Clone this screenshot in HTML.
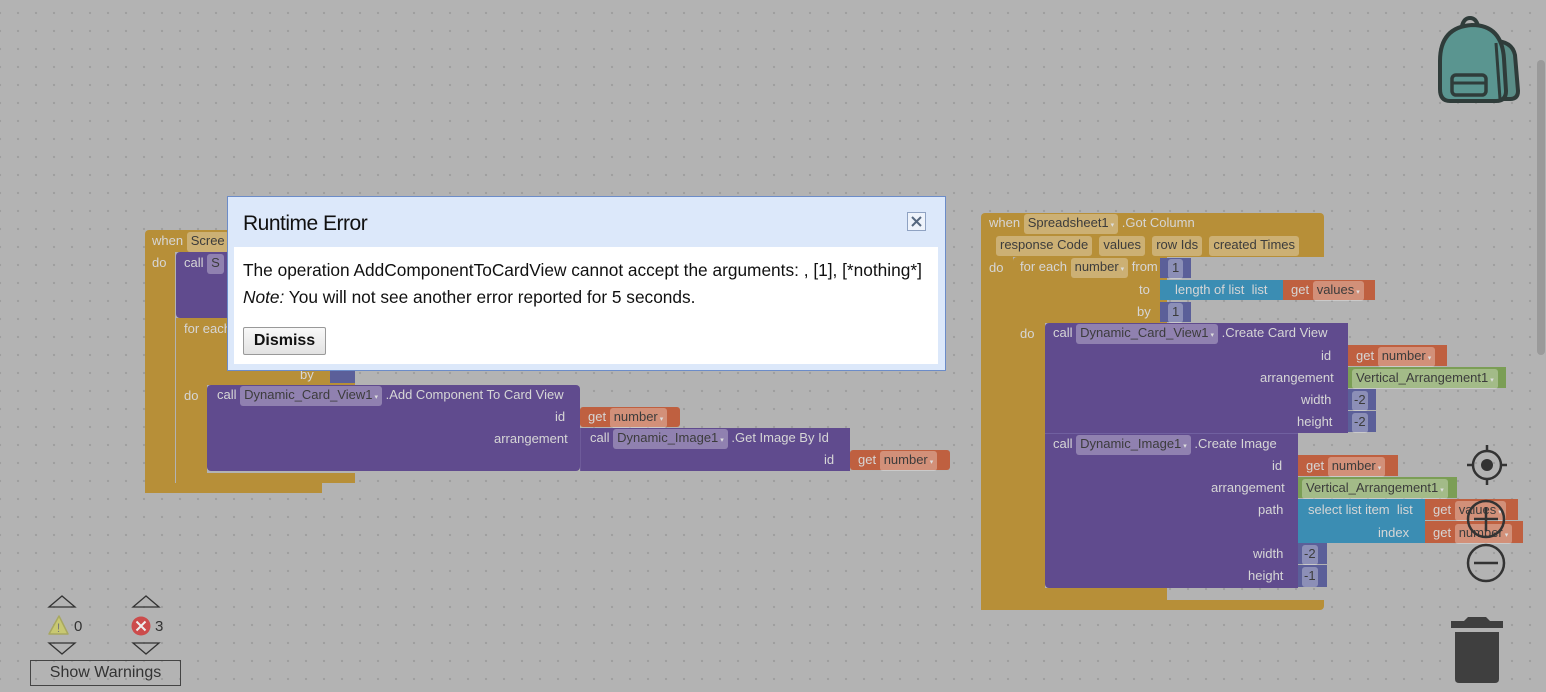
<!DOCTYPE html>
<html><head><meta charset="utf-8"><style>
*{margin:0;padding:0;box-sizing:border-box}
body{width:1546px;height:692px;overflow:hidden;position:relative;font-family:"Liberation Sans",sans-serif;
background-color:#b3b3b3;background-image:radial-gradient(circle,#9e9e9e 1px,transparent 1.3px);background-size:18px 18px;background-position:9px 4px}
.b{position:absolute}
.G{background:#b78f38}.P{background:#604b8e}.O{background:#bf6040}.M{background:#5b5f99}.B{background:#3b8db3}.N{background:#7b9e55}
.t{position:absolute;font-size:13px;color:#d6d6d6;white-space:nowrap;line-height:17px}
.f{display:inline-block;background:rgba(255,255,255,.3);color:#3c3c3c;border-radius:3px;padding:0 4px;line-height:17px}
.f:after{content:" ▾";font-size:7px;color:#ddd}
.nf:after{content:""}
</style></head><body>
<!-- left group -->
<div class="b G" style="left:145px;top:230px;width:177px;height:263px;border-radius:4px"></div>
<div class="b" style="left:175px;top:252px;width:147px;height:231px;background:#b3b3b3"></div>
<div class="b G" style="left:145px;top:483px;width:177px;height:10px"></div>
<div class="t" style="left:152px;top:232px">when <span class="f nf">Scree</span></div>
<div class="t" style="left:152px;top:254px">do</div>
<div class="b P" style="left:176px;top:252px;width:60px;height:66px;border-radius:4px"></div>
<div class="t" style="left:184px;top:254px">call <span class="f nf">S</span></div>
<div class="b G" style="left:176px;top:318px;width:179px;height:165px"></div>
<div class="b" style="left:207px;top:385px;width:148px;height:88px;background:#b3b3b3"></div>
<div class="b G" style="left:176px;top:473px;width:155px;height:10px"></div>
<div class="t" style="left:184px;top:320px">for each</div>
<div class="t" style="left:300px;top:366px">by</div>
<div class="b M" style="left:330px;top:365px;width:25px;height:18px"></div>
<div class="t" style="left:184px;top:387px">do</div>
<div class="b P" style="left:207px;top:385px;width:373px;height:86px;border-radius:4px"></div>
<div class="b P" style="left:580px;top:428px;width:270px;height:43px;border-left:1px solid #6e5b9a"></div>
<div class="t" style="left:217px;top:386px">call <span class="f">Dynamic_Card_View1</span> .Add Component To Card View</div>
<div class="t" style="left:555px;top:408px">id</div>
<div class="t" style="left:494px;top:430px">arrangement</div>
<div class="t" style="left:590px;top:429px">call <span class="f">Dynamic_Image1</span> .Get Image By Id</div>
<div class="t" style="left:824px;top:451px">id</div>
<div class="b O" style="left:580px;top:407px;width:100px;height:20px;border-radius:3px"></div>
<div class="t" style="left:588px;top:408px">get <span class="f">number</span></div>
<div class="b O" style="left:850px;top:450px;width:100px;height:20px;border-radius:3px"></div>
<div class="t" style="left:858px;top:451px">get <span class="f">number</span></div>

<!-- right group -->
<div class="b G" style="left:981px;top:213px;width:343px;height:44px;border-radius:4px 4px 0 0"></div>
<div class="b G" style="left:981px;top:257px;width:32px;height:353px"></div>
<div class="b G" style="left:981px;top:600px;width:343px;height:10px;border-radius:0 0 4px 4px"></div>
<div class="t" style="left:989px;top:214px">when <span class="f">Spreadsheet1</span> .Got Column</div>
<div class="t" style="left:996px;top:236px"><span class="f nf">response Code</span>&nbsp; <span class="f nf">values</span>&nbsp; <span class="f nf">row Ids</span>&nbsp; <span class="f nf">created Times</span></div>
<div class="t" style="left:989px;top:259px">do</div>
<div class="b G" style="left:1013px;top:257px;width:154px;height:66px;border-radius:4px 0 0 0"></div>
<div class="b G" style="left:1013px;top:323px;width:32px;height:277px"></div>
<div class="b G" style="left:1013px;top:588px;width:154px;height:12px"></div>
<div class="t" style="left:1020px;top:258px">for each <span class="f">number</span> from</div>
<div class="t" style="left:1139px;top:281px">to</div>
<div class="t" style="left:1137px;top:303px">by</div>
<div class="t" style="left:1020px;top:325px">do</div>
<div class="b M" style="left:1160px;top:258px;width:31px;height:20px"></div>
<div class="t" style="left:1168px;top:259px"><span class="f nf">1</span></div>
<div class="b B" style="left:1160px;top:280px;width:123px;height:20px"></div>
<div class="t" style="left:1175px;top:281px">length of list&nbsp; list</div>
<div class="b O" style="left:1283px;top:280px;width:92px;height:20px"></div>
<div class="t" style="left:1291px;top:281px">get <span class="f">values</span></div>
<div class="b M" style="left:1160px;top:302px;width:31px;height:20px"></div>
<div class="t" style="left:1168px;top:303px"><span class="f nf">1</span></div>

<div class="b P" style="left:1045px;top:323px;width:303px;height:110px;border-radius:4px 0 0 0"></div>
<div class="t" style="left:1053px;top:324px">call <span class="f">Dynamic_Card_View1</span> .Create Card View</div>
<div class="t" style="left:1321px;top:347px">id</div>
<div class="t" style="left:1260px;top:369px">arrangement</div>
<div class="t" style="left:1301px;top:391px">width</div>
<div class="t" style="left:1297px;top:413px">height</div>
<div class="b O" style="left:1348px;top:345px;width:99px;height:21px"></div>
<div class="t" style="left:1356px;top:347px">get <span class="f">number</span></div>
<div class="b N" style="left:1348px;top:367px;width:158px;height:21px"></div>
<div class="t" style="left:1352px;top:369px"><span class="f">Vertical_Arrangement1</span></div>
<div class="b M" style="left:1348px;top:389px;width:28px;height:21px"></div>
<div class="t" style="left:1352px;top:391px"><span class="f nf" style="padding:0 2px">-2</span></div>
<div class="b M" style="left:1348px;top:411px;width:28px;height:21px"></div>
<div class="t" style="left:1352px;top:413px"><span class="f nf" style="padding:0 2px">-2</span></div>

<div class="b P" style="left:1045px;top:433px;width:253px;height:155px;border-top:1px solid #7060a0;border-radius:0 0 0 4px"></div>
<div class="t" style="left:1053px;top:435px">call <span class="f">Dynamic_Image1</span> .Create Image</div>
<div class="t" style="left:1272px;top:457px">id</div>
<div class="t" style="left:1211px;top:479px">arrangement</div>
<div class="t" style="left:1258px;top:501px">path</div>
<div class="t" style="left:1253px;top:545px">width</div>
<div class="t" style="left:1248px;top:567px">height</div>
<div class="b O" style="left:1298px;top:455px;width:100px;height:21px"></div>
<div class="t" style="left:1306px;top:457px">get <span class="f">number</span></div>
<div class="b N" style="left:1298px;top:477px;width:159px;height:21px"></div>
<div class="t" style="left:1302px;top:479px"><span class="f">Vertical_Arrangement1</span></div>
<div class="b B" style="left:1298px;top:499px;width:127px;height:44px"></div>
<div class="t" style="left:1308px;top:501px">select list item&nbsp; list</div>
<div class="t" style="left:1378px;top:524px">index</div>
<div class="b O" style="left:1425px;top:499px;width:93px;height:21px"></div>
<div class="t" style="left:1433px;top:501px">get <span class="f">values</span></div>
<div class="b O" style="left:1425px;top:521px;width:98px;height:22px"></div>
<div class="t" style="left:1433px;top:524px">get <span class="f">number</span></div>
<div class="b M" style="left:1298px;top:543px;width:29px;height:21px"></div>
<div class="t" style="left:1302px;top:545px"><span class="f nf" style="padding:0 2px">-2</span></div>
<div class="b M" style="left:1298px;top:565px;width:29px;height:22px"></div>
<div class="t" style="left:1302px;top:567px"><span class="f nf" style="padding:0 2px">-1</span></div>

<!-- scrollbar -->
<div class="b" style="left:1537px;top:60px;width:8px;height:295px;background:#9a9a9a;border-radius:4px"></div>

<!-- backpack -->
<svg class="b" style="left:1436px;top:15px" width="88" height="90" viewBox="0 0 88 90">
<path d="M58 26 Q76 26 79 40 L82 76 Q82 84 74 84 L66 84" fill="#5a8d87" stroke="#2f3c3a" stroke-width="4"/>
<path d="M14 86 Q4 86 4 74 L4 46 Q4 12 36 10 Q66 10 68 44 L70 76 Q70 86 60 86 Z" fill="#5a9590" stroke="#2f3c3a" stroke-width="4"/>
<path d="M26 11 Q28 3 34 3 Q40 3 42 11" fill="none" stroke="#2f3c3a" stroke-width="4"/>
<rect x="16" y="60" width="34" height="20" rx="4" fill="#5a9590" stroke="#2f3c3a" stroke-width="3.5"/>
<line x1="16" y1="68" x2="50" y2="68" stroke="#2f3c3a" stroke-width="3"/>
<line x1="60" y1="28" x2="64" y2="84" stroke="#2f3c3a" stroke-width="3"/>
</svg>

<!-- zoom controls -->
<svg class="b" style="left:1460px;top:440px" width="56" height="150" viewBox="0 0 56 150">
<circle cx="27" cy="25" r="14" fill="none" stroke="#333" stroke-width="2.5"/>
<circle cx="27" cy="25" r="6" fill="#333"/>
<line x1="27" y1="5" x2="27" y2="11" stroke="#333" stroke-width="2.5"/><line x1="27" y1="39" x2="27" y2="45" stroke="#333" stroke-width="2.5"/>
<line x1="7" y1="25" x2="13" y2="25" stroke="#333" stroke-width="2.5"/><line x1="41" y1="25" x2="47" y2="25" stroke="#333" stroke-width="2.5"/>
<circle cx="26" cy="79" r="18" fill="none" stroke="#333" stroke-width="2.5"/>
<line x1="14" y1="79" x2="38" y2="79" stroke="#333" stroke-width="2.5"/><line x1="26" y1="67" x2="26" y2="91" stroke="#333" stroke-width="2.5"/>
<circle cx="26" cy="123" r="18" fill="none" stroke="#333" stroke-width="2.5"/>
<line x1="14" y1="123" x2="38" y2="123" stroke="#333" stroke-width="2.5"/>
</svg>

<!-- trash -->
<svg class="b" style="left:1450px;top:615px" width="54" height="70" viewBox="0 0 54 70">
<path d="M18 2 L36 2 L40 6 L53 6 L53 13 L1 13 L1 6 L14 6 Z" fill="#3f3f3f"/>
<path d="M5 17 L49 17 L49 64 Q49 68 45 68 L9 68 Q5 68 5 64 Z" fill="#3f3f3f"/>
</svg>

<!-- warnings -->
<svg class="b" style="left:40px;top:594px" width="140" height="64" viewBox="0 0 140 64">
<path d="M9 13 L22 2 L35 13 Z" fill="none" stroke="#333" stroke-width="1.3"/>
<path d="M9 49 L22 60 L35 49 Z" fill="none" stroke="#333" stroke-width="1.3"/>
<path d="M93 13 L106 2 L119 13 Z" fill="none" stroke="#333" stroke-width="1.3"/>
<path d="M93 49 L106 60 L119 49 Z" fill="none" stroke="#333" stroke-width="1.3"/>
<path d="M19 22 L28 40 L9 40 Z" fill="#c8c872" stroke="#a8a860" stroke-width="1.5" stroke-linejoin="round"/>
<text x="18.5" y="38" font-size="12" fill="#777" text-anchor="middle" font-family="Liberation Sans">!</text>
<circle cx="101" cy="32" r="9.5" fill="#cc4c4c"/>
<path d="M96.5 27.5 L105.5 36.5 M105.5 27.5 L96.5 36.5" stroke="#eee" stroke-width="2"/>
</svg>
<div class="b" style="left:74px;top:618px;font-size:15px;color:#333">0</div>
<div class="b" style="left:155px;top:618px;font-size:15px;color:#333">3</div>
<div class="b" style="left:30px;top:660px;width:151px;height:26px;border:1.5px solid #444;font-size:16px;color:#333;text-align:center;line-height:23px">Show Warnings</div>

<!-- dialog -->
<div class="b" style="left:227px;top:196px;width:719px;height:175px;background:#dce8fa;border:1px solid #6c8cc8"></div>
<div class="b" style="left:234px;top:247px;width:704px;height:117px;background:#fff"></div>
<div class="b" style="left:243px;top:212px;font-size:21px;color:#111;letter-spacing:-0.5px">Runtime Error</div>
<div class="b" style="left:907px;top:212px;width:19px;height:19px;border:1px solid #8fa2c2;background:#eef3fb"></div>
<svg class="b" style="left:907px;top:212px" width="19" height="19"><path d="M5 5 L14 14 M14 5 L5 14" stroke="#55677f" stroke-width="2"/></svg>
<div class="b" style="left:243px;top:257px;font-size:17.3px;color:#111;line-height:27px;white-space:nowrap">The operation AddComponentToCardView cannot accept the arguments: , [1], [*nothing*]<br><i>Note:</i> You will not see another error reported for 5 seconds.</div>
<div class="b" style="left:243px;top:327px;width:83px;height:28px;background:linear-gradient(#f8f8f8,#e2e2e2);border:1px solid #999;border-radius:2px;font-size:16px;font-weight:bold;color:#111;text-align:center;line-height:26px">Dismiss</div>
</body></html>
